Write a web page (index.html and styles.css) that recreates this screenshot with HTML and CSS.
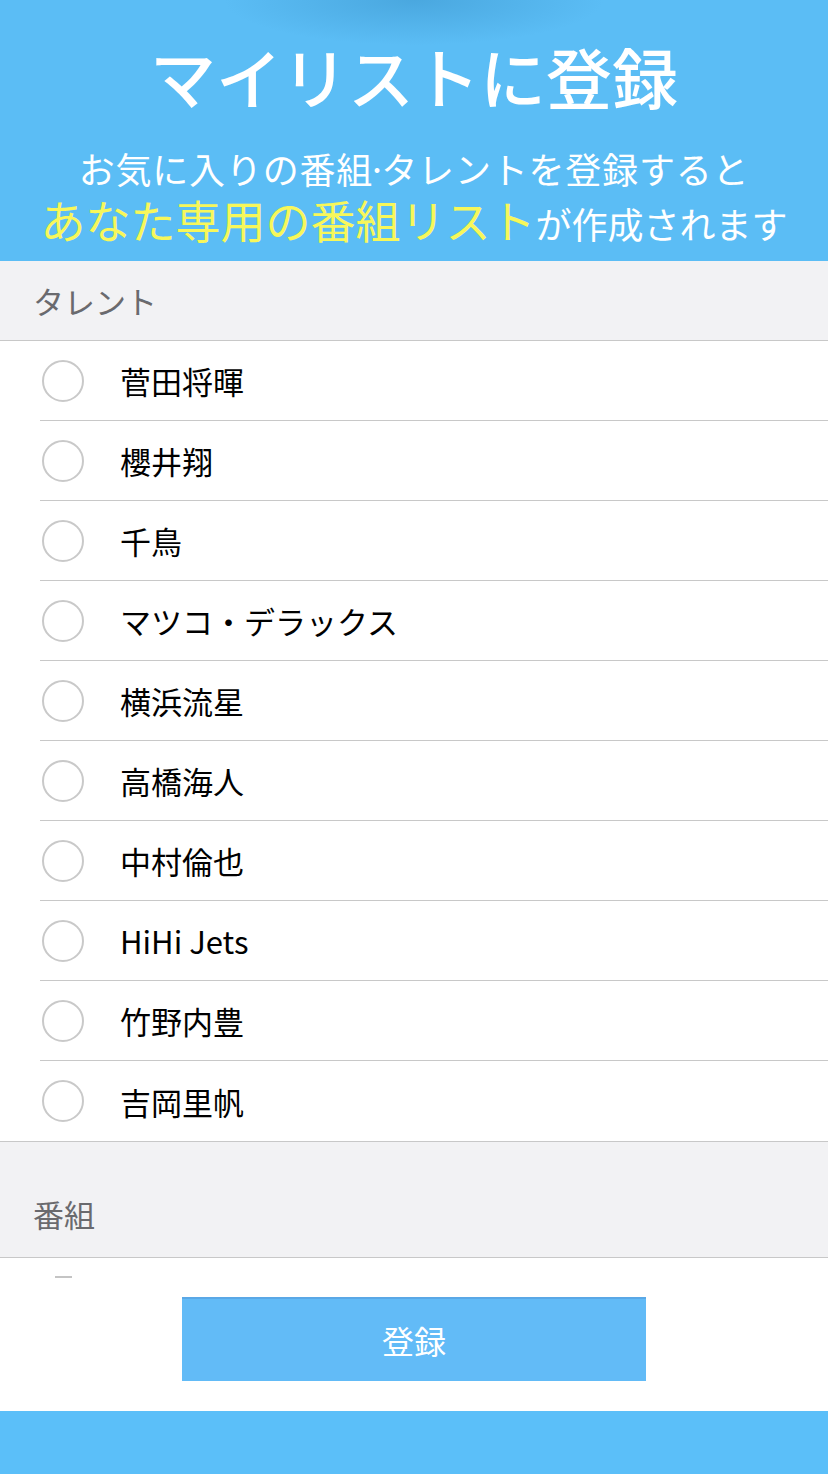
FILE: index.html
```html
<!DOCTYPE html>
<html lang="ja">
<head>
    <meta charset="UTF-8">
    <meta name="viewport" content="width=device-width, initial-scale=1.0">
    <title>マイリストに登録</title>
    <link rel="stylesheet" href="styles.css">
</head>
<body>

<!-- Header -->
<header class="hero">
    <h1>マイリストに登録</h1>
    <p class="lead">お気に入りの番組<span class="dot">·</span>タレントを登録すると</p>
    <p class="lead2"><span class="hl">あなた専用の番組リスト</span>が作成されます</p>
</header>

<!-- Talent list -->
<div class="section-head">タレント</div>
<ul class="check-list">
    <li><span class="radio"></span>菅田将暉</li>
    <li><span class="radio"></span>櫻井翔</li>
    <li><span class="radio"></span>千鳥</li>
    <li><span class="radio"></span>マツコ・デラックス</li>
    <li><span class="radio"></span>横浜流星</li>
    <li><span class="radio"></span>高橋海人</li>
    <li><span class="radio"></span>中村倫也</li>
    <li><span class="radio"></span>HiHi Jets</li>
    <li><span class="radio"></span>竹野内豊</li>
    <li><span class="radio"></span>吉岡里帆</li>
</ul>

<!-- Program list -->
<div class="section-head tall">番組</div>
<div class="program-list">
    <span class="peek"></span>
</div>

<div class="actions">
    <button class="submit">登録</button>
</div>

<footer class="bottom-bar"></footer>

</body>
</html>
```

FILE: styles.css
```css
body {
    margin: 0;
    font-family: "Noto Sans CJK JP", "Noto Sans", sans-serif;
    background-color: #fff;
    color: #000;
}

.hero {
    height: 261px;
    background-color: #5bbdf5;
    background-image: radial-gradient(ellipse 190px 45px at 414px 0, rgba(60, 150, 205, 0.55), rgba(60, 150, 205, 0));
    color: #fff;
    text-align: center;
    box-sizing: border-box;
    padding-top: 33px;
}

.hero h1 {
    margin: 0;
    font-size: 66px;
    font-weight: 500;
    line-height: 84px;
}

.hero .lead {
    margin: 28px 0 0;
    font-size: 36px;
    line-height: 46px;
    letter-spacing: 0.8px;
}

.hero .dot {
    letter-spacing: -6px;
    margin-left: -6px;
}

.hero .lead2 {
    margin: 0;
    font-size: 36px;
    line-height: 58px;
    white-space: nowrap;
}

.hl {
    color: #f7f75a;
    font-size: 45px;
}

.section-head {
    height: 80px;
    box-sizing: border-box;
    padding: 0 33px;
    display: flex;
    align-items: center;
    background-color: #f2f2f4;
    border-bottom: 1px solid #c8c8c8;
    color: #6a6a6e;
    font-size: 31px;
}

.section-head.tall {
    height: 116px;
    align-items: flex-end;
    padding-bottom: 21px;
}

.check-list {
    list-style: none;
    margin: 0;
    padding: 0;
    border-bottom: 1px solid #c8c8c8;
}

.check-list li {
    height: 80px;
    box-sizing: border-box;
    margin-left: 40px;
    display: flex;
    align-items: center;
    font-size: 31px;
    border-bottom: 1px solid #c8c8c8;
}

.check-list li:last-child {
    border-bottom: none;
}

.radio {
    width: 38px;
    height: 38px;
    border: 2.5px solid #c9c9c9;
    border-radius: 50%;
    margin-left: 2px;
    margin-right: 36px;
    flex-shrink: 0;
}

.program-list {
    height: 21px;
    padding-left: 48px;
}

.peek {
    display: block;
    width: 17px;
    height: 2px;
    margin: 18px 0 0 7px;
    background-color: #c4c4c4;
}

.actions {
    display: flex;
    justify-content: center;
    padding-bottom: 30px;
}

.submit {
    width: 464px;
    height: 84px;
    border: none;
    border-top: 2px solid #5aa8e6;
    background-color: #62bbf7;
    color: #fff;
    font-family: "Noto Sans CJK JP", sans-serif;
    font-size: 32px;
    cursor: pointer;
}

.bottom-bar {
    height: 63px;
    background-color: #5bbff9;
}
```
